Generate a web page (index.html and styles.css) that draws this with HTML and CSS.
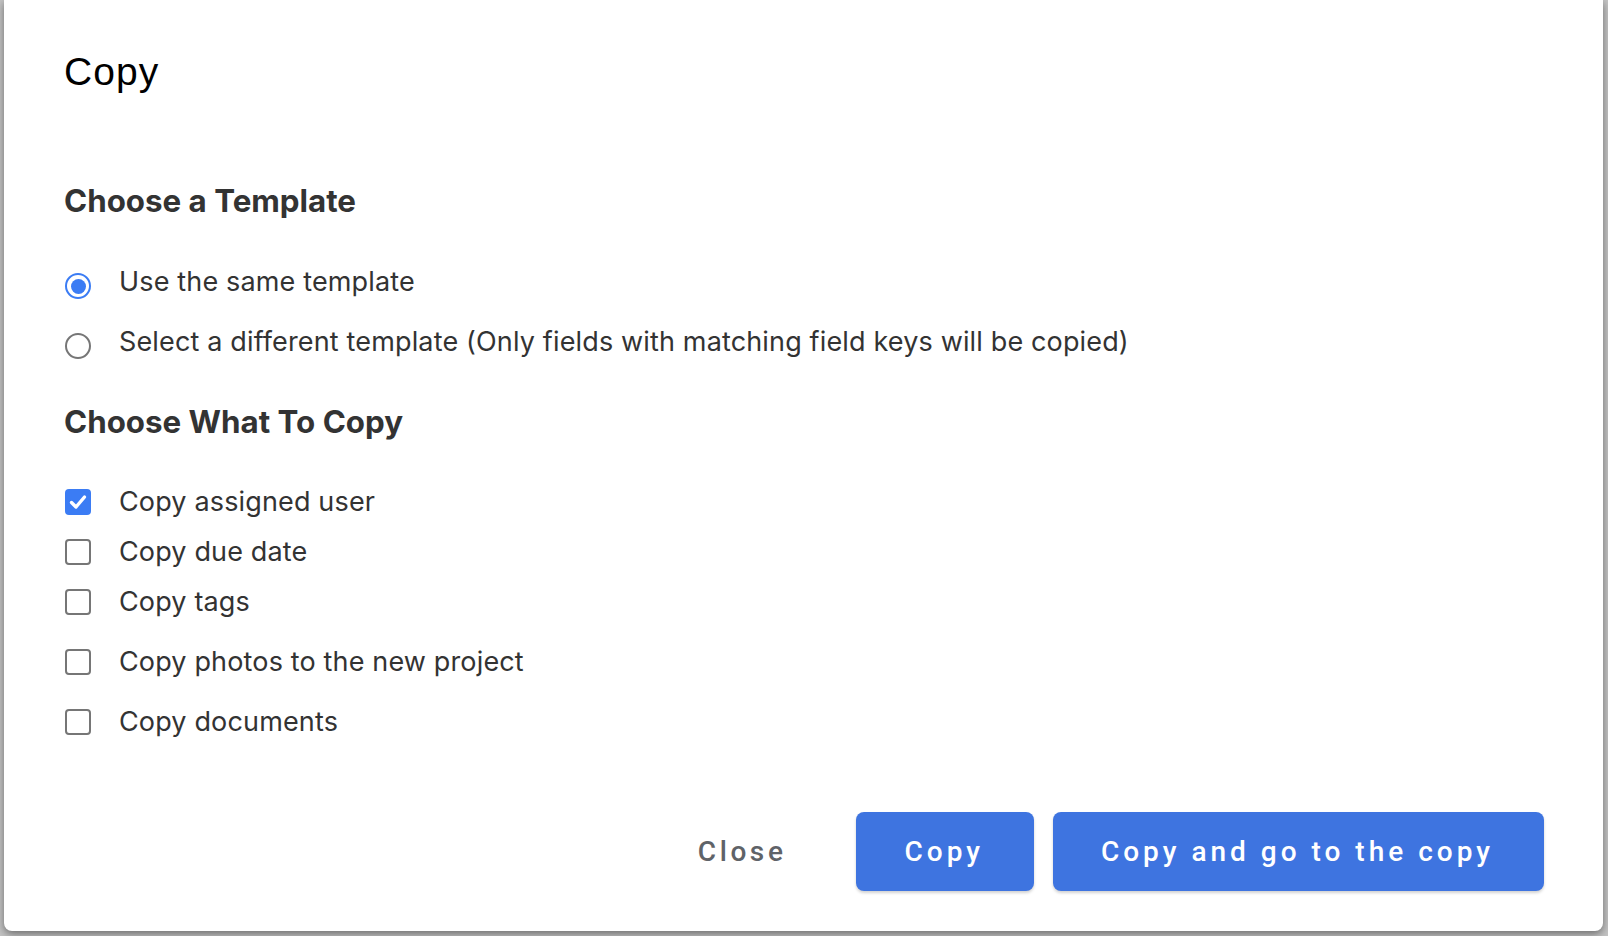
FILE: index.html
```html
<!DOCTYPE html>
<html lang="en">
<head>
<meta charset="utf-8">
<title>Copy</title>
<link rel="stylesheet" href="styles.css">
</head>
<body>
<div class="dialog">
  <h1 class="title">Copy</h1>

  <h2 class="section-heading first">Choose a Template</h2>
  <div class="options radios">
    <label class="option">
      <span class="radio checked"><span class="dot"></span></span>
      <span class="label">Use the same template</span>
    </label>
    <label class="option">
      <span class="radio"></span>
      <span class="label">Select a different template (Only fields with matching field keys will be copied)</span>
    </label>
  </div>

  <h2 class="section-heading">Choose What To Copy</h2>
  <div class="options checks">
    <label class="option">
      <span class="checkbox checked">
        <svg viewBox="0 0 26 26" width="26" height="26"><path d="M6.5 13.5 L11 18 L19.5 8" fill="none" stroke="#fff" stroke-width="3.4" stroke-linecap="round" stroke-linejoin="round"/></svg>
      </span>
      <span class="label">Copy assigned user</span>
    </label>
    <label class="option">
      <span class="checkbox"></span>
      <span class="label">Copy due date</span>
    </label>
    <label class="option">
      <span class="checkbox"></span>
      <span class="label">Copy tags</span>
    </label>
    <label class="option wide">
      <span class="checkbox"></span>
      <span class="label">Copy photos to the new project</span>
    </label>
    <label class="option wide">
      <span class="checkbox"></span>
      <span class="label">Copy documents</span>
    </label>
  </div>

  <div class="actions">
    <button class="btn btn-text">Close</button>
    <button class="btn btn-primary">Copy</button>
    <button class="btn btn-primary">Copy and go to the copy</button>
  </div>
</div>
</body>
</html>
```

FILE: styles.css
```css
html, body {
  margin: 0;
  padding: 0;
}
body {
  background: #c4c4c4;
  width: 1608px;
  height: 936px;
  overflow: hidden;
}
.dialog {
  box-sizing: border-box;
  margin-left: 4px;
  width: 1599px;
  height: 931px;
  background: #ffffff;
  border-radius: 0 0 8px 8px;
  box-shadow: 0 3px 8px rgba(0, 0, 0, 0.45);
  padding: 50px 59px 40px 60px;
  display: flex;
  flex-direction: column;
}
.title {
  margin: 0;
  font-family: "Liberation Sans", Arial, sans-serif;
  font-weight: 400;
  font-size: 39px;
  letter-spacing: 1.1px;
  line-height: 44px;
  color: #000;
}
.section-heading {
  margin: 43px 0 0;
  font-family: Inter, "Noto Sans", sans-serif;
  font-weight: 700;
  font-size: 31.3px;
  line-height: 36px;
  color: #333333;
  letter-spacing: 0;
}
.section-heading.first {
  margin-top: 89px;
}
.options {
  display: flex;
  flex-direction: column;
}
.radios {
  margin-top: 42px;
  gap: 20px;
}
.checks {
  margin-top: 41px;
  gap: 10px;
}
.checks .option.wide {
  margin-top: 10px;
}
.option {
  display: flex;
  align-items: center;
  height: 40px;
  font-family: Inter, "Noto Sans", sans-serif;
  font-size: 27px;
  color: #333333;
}
.label {
  margin-left: 28px;
  letter-spacing: 0.15px;
}
.radio {
  box-sizing: border-box;
  width: 26px;
  height: 26px;
  border-radius: 50%;
  border: 2px solid #767676;
  display: flex;
  align-items: center;
  justify-content: center;
  margin-top: 10px;
  margin-left: 1px;
  flex: none;
}
.radio.checked {
  border: 2.5px solid #3b7cf4;
}
.radio .dot {
  width: 15px;
  height: 15px;
  border-radius: 50%;
  background: #3b7cf4;
}
.checkbox {
  box-sizing: border-box;
  width: 26px;
  height: 26px;
  border-radius: 4px;
  border: 2px solid #767676;
  flex: none;
  margin-top: 2px;
  margin-left: 1px;
  display: flex;
}
.checkbox.checked {
  border: none;
  background: #3b7cf4;
}
.actions {
  margin-top: auto;
  display: flex;
  justify-content: flex-end;
  gap: 19px;
}
.btn {
  height: 79px;
  border: none;
  border-radius: 8px;
  font-family: Roboto, "Noto Sans", sans-serif;
  font-weight: 500;
  font-size: 28px;
  letter-spacing: 4px;
  padding: 0 50px 0 48px;
  cursor: pointer;
}
.btn-text {
  background: transparent;
  color: #5f6368;
  letter-spacing: 3.6px;
  padding: 0 51px 0 48px;
}
.btn-primary {
  background: #3e74e0;
  color: #ffffff;
  box-shadow: 0 2px 3px rgba(0, 0, 0, 0.18);
}
```
